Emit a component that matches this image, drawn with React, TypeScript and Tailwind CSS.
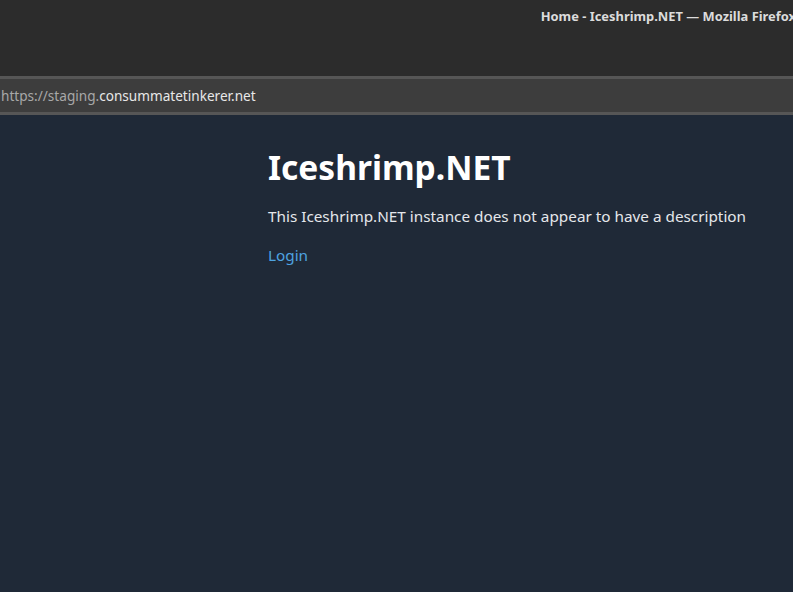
import React from "react";

const font = { fontFamily: '"Noto Sans", "Open Sans", sans-serif' };

const App = () => {
  return (
    <div className="flex h-[592px] w-[793px] flex-col overflow-hidden bg-[#1f2937]" style={font}>
      <div className="flex h-[76px] shrink-0 items-start justify-end overflow-hidden bg-[#2c2c2c] pt-[7px]">
        <div className="whitespace-nowrap text-[12.9px] font-bold text-[#dcdcdc] -mr-[3px]">
          Home - Iceshrimp.NET — Mozilla Firefox
        </div>
      </div>
      <div className="h-[3px] shrink-0 bg-[#565656]" />
      <div className="flex h-[33px] shrink-0 items-center bg-[#3d3d3d] pl-[1px] pt-[1px] text-[13.6px]">
        <span className="text-[#a8a8a8]">https://staging.</span>
        <span className="text-[#e8e8e8]">consummatetinkerer.net</span>
      </div>
      <div className="h-[3px] shrink-0 bg-[#565656]" />
      <div className="flex flex-col pl-[268px] pt-[30px]">
        <h1 className="text-[33.5px] font-bold leading-[44px] text-white">Iceshrimp.NET</h1>
        <p className="mt-[15px] text-[15.3px] leading-[24px] text-[#e5e7eb]">
          This Iceshrimp.NET instance does not appear to have a description
        </p>
        <a href="#" className="mt-[15px] text-[15.3px] leading-[24px] text-[#4ea3e0]">
          Login
        </a>
      </div>
    </div>
  );
};

export default App;
